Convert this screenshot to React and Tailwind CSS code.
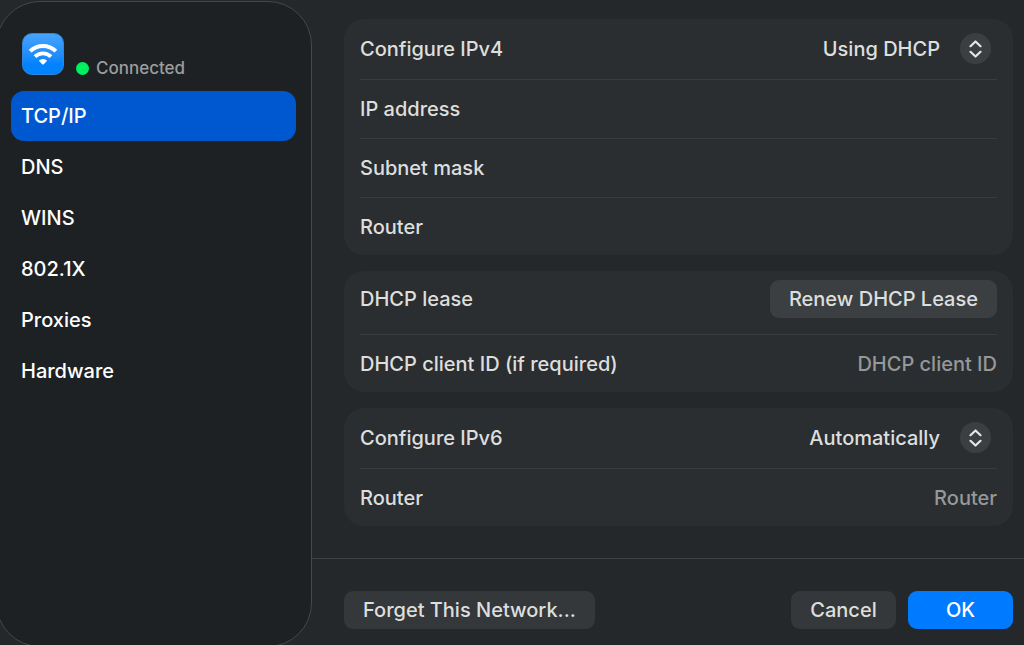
import React from "react";

const tabs = ["TCP/IP", "DNS", "WINS", "802.1X", "Proxies", "Hardware"];

function WifiBadge() {
  return (
    <div className="flex size-[42px] items-center justify-center rounded-[10px] border border-[#2f86dc] bg-linear-to-b from-[#45a3fc] to-[#0083fd] to-75%">
      <svg viewBox="0 0 30 24" className="w-[30px] shrink-0" fill="none" aria-hidden="true">
        <g stroke="#fff" strokeWidth="3.8">
          <path d="M2.1 9.2A18.6 18.6 0 0 1 27.9 9.2" />
          <path d="M7 14.6A11.4 11.4 0 0 1 23 14.6" />
        </g>
        <path
          d="M10.9 18.7A5.8 5.8 0 0 1 19.1 18.7L15.8 22.2Q15 22.9 14.2 22.2Z"
          fill="#fff"
        />
      </svg>
    </div>
  );
}

function Sidebar({ active, onSelect }) {
  return (
    <aside className="-mb-0.5 -ml-1 mt-px w-[316px] shrink-0 rounded-[44px] border border-[#42494c] bg-[#1d2123] pl-[14px] pr-[15px] pt-[31px]">
      <div className="flex items-end gap-3 pl-[11px]">
        <WifiBadge />
        <p className="flex items-center gap-[7px] text-[17px] leading-[14px] text-[#9b9d9e]">
          <span className="size-[13px] rounded-full bg-[#00f05f]" />
          Connected
        </p>
      </div>

      <nav className="mt-4 flex flex-col gap-px">
        {tabs.map((tab) => (
          <button
            key={tab}
            type="button"
            onClick={() => onSelect(tab)}
            className={`h-[50px] rounded-[13px] px-[10px] text-left text-white ${
              tab === active ? "bg-[#0058d0]" : ""
            }`}
          >
            {tab}
          </button>
        ))}
      </nav>
    </aside>
  );
}

function Card({ children }) {
  return (
    <section className="divide-y divide-[#393d3f] rounded-[20px] bg-[#2b2e30] px-4">
      {children}
    </section>
  );
}

function Row({ label, children }) {
  return (
    <div className="flex items-center justify-between py-[17px] last:pb-4">
      <span>{label}</span>
      {children}
    </div>
  );
}

function InputRow({ id, label, placeholder }) {
  return (
    <div className="flex items-center justify-between gap-4 py-[17px] last:pb-4">
      <label htmlFor={id} className="shrink-0">
        {label}
      </label>
      <input
        id={id}
        placeholder={placeholder}
        className="h-6 min-w-0 flex-1 bg-transparent text-right outline-none placeholder:text-[#969899]"
      />
    </div>
  );
}

function SelectRow({ id, label, options }) {
  return (
    <div className="flex items-center justify-between pb-[15px] pt-[14px]">
      <label htmlFor={id}>{label}</label>
      <div className="relative">
        <select
          id={id}
          className="block h-[31px] appearance-none bg-transparent pr-[57px] outline-none [text-align-last:right]"
        >
          {options.map((option) => (
            <option key={option}>{option}</option>
          ))}
        </select>
        <span className="pointer-events-none absolute right-[6px] top-0 flex size-[31px] items-center justify-center rounded-full bg-[#3c3f41]">
          <svg
            viewBox="0 0 14 18"
            className="w-[14px]"
            fill="none"
            stroke="#e6e6e6"
            strokeWidth="2.2"
            strokeLinecap="round"
            strokeLinejoin="round"
          >
            <path d="M1.5 6.2 6.5 1.5 11.5 6.2M1.5 11.8 6.5 16.5 11.5 11.8" />
          </svg>
        </span>
      </div>
    </div>
  );
}

function App() {
  const [active, setActive] = React.useState("TCP/IP");

  return (
    <div className="flex min-h-screen overflow-hidden bg-[#24282a] font-['Inter','Liberation_Sans',sans-serif] text-[20px] font-medium leading-6 text-[#dddede]">
      <Sidebar active={active} onSelect={setActive} />

      <div className="flex min-w-0 flex-1 flex-col">
        <main className="flex flex-1 flex-col gap-4 pb-8 pl-8 pr-[11px] pt-[19px]">
          <Card>
            <SelectRow
              id="ipv4"
              label="Configure IPv4"
              options={["Using DHCP", "Manually", "Off"]}
            />
            <Row label="IP address" />
            <Row label="Subnet mask" />
            <Row label="Router" />
          </Card>

          <Card>
            <div className="flex items-center justify-between pb-4 pt-[9px]">
              <span>DHCP lease</span>
              <button
                type="button"
                className="h-[38px] rounded-[9px] bg-[#3c3f41] px-[19px]"
              >
                Renew DHCP Lease
              </button>
            </div>
            <InputRow
              id="client-id"
              label="DHCP client ID (if required)"
              placeholder="DHCP client ID"
            />
          </Card>

          <Card>
            <SelectRow
              id="ipv6"
              label="Configure IPv6"
              options={["Automatically", "Manually", "Off"]}
            />
            <InputRow id="router" label="Router" placeholder="Router" />
          </Card>
        </main>

        <footer className="flex gap-3 border-t border-[#3d4244] pb-4 pl-8 pr-[11px] pt-8">
          <button
            type="button"
            className="mr-auto h-[38px] rounded-[9px] bg-[#34383a] px-[19px]"
          >
            Forget This Network...
          </button>
          <button
            type="button"
            className="h-[38px] w-[105px] rounded-[9px] bg-[#34383a]"
          >
            Cancel
          </button>
          <button
            type="button"
            className="h-[38px] w-[105px] rounded-[9px] bg-[#007aff] text-white"
          >
            OK
          </button>
        </footer>
      </div>
    </div>
  );
}

export default App;
